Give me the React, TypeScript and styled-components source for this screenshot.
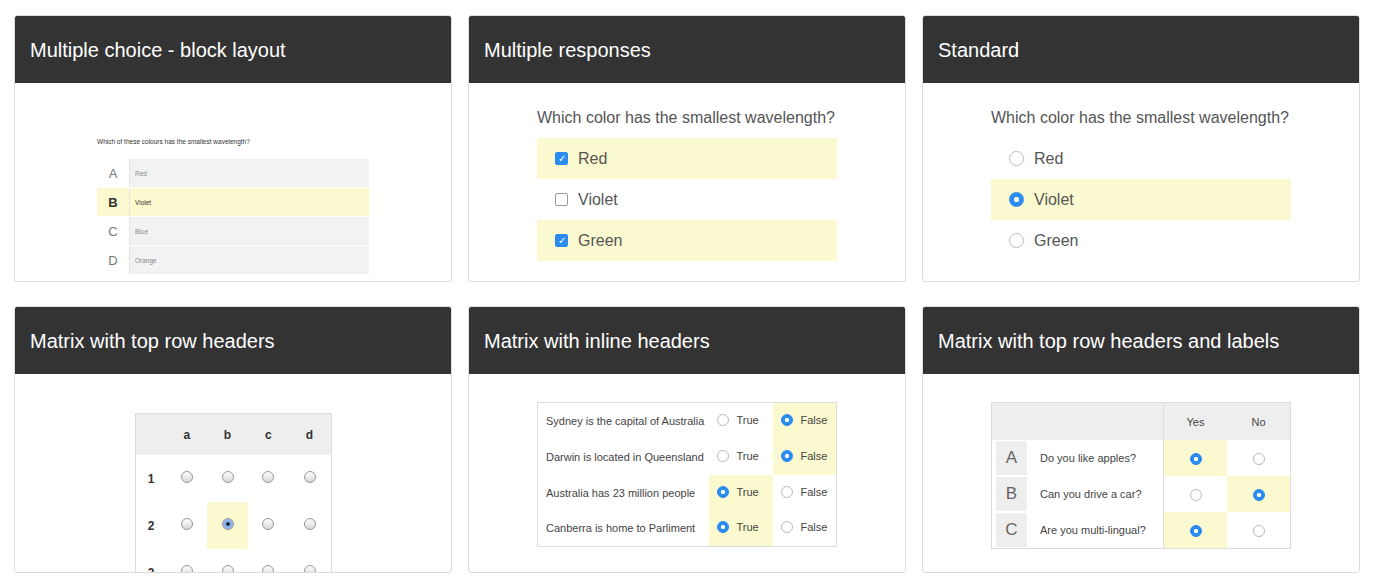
import styled, { createGlobalStyle } from 'styled-components';

const GlobalStyle = createGlobalStyle`
	body {
		margin: 0;
		background: #fff;
		font-family: 'Liberation Sans', Arial, sans-serif;
	}
`;

const Grid = styled.div`
	display: grid;
	grid-template-columns: repeat(3, 438px);
	column-gap: 16px;
	row-gap: 24px;
	padding: 15px 0 0 14px;
`;

const Card = styled.div`
	border: 1px solid #ddd;
	border-radius: 3px;
	overflow: hidden;
	height: 265px;
	display: flex;
	flex-direction: column;
`;

const CardHeader = styled.div`
	background: #333;
	color: #fff;
	height: 67px;
	flex-shrink: 0;
	display: flex;
	align-items: center;
	padding: 2px 0 0 15px;
	box-sizing: border-box;
	font-size: 20px;
`;

const CardBody = styled.div<{ $top: number }>`
	flex: 1;
	overflow: hidden;
	display: flex;
	flex-direction: column;
	align-items: center;
	padding-top: ${(p) => p.$top}px;
`;

const Yellow = '#fbf9cf';

/* block layout */
const SmallQ = styled.div`
	width: 272px;
	font-size: 6.5px;
	color: #333;
	margin-bottom: 14px;
`;
const BlockList = styled.div`
	width: 272px;
	display: flex;
	flex-direction: column;
	gap: 1px;
`;
const BlockRow = styled.div<{ $on?: boolean }>`
	display: flex;
	height: 28px;
	background: ${(p) => (p.$on ? Yellow : '#f2f2f2')};
`;
const BlockLetter = styled.div<{ $on?: boolean }>`
	width: 32px;
	display: flex;
	align-items: center;
	justify-content: center;
	font-size: 13px;
	color: ${(p) => (p.$on ? '#333' : '#777')};
	font-weight: ${(p) => (p.$on ? 'bold' : 'normal')};
	background: ${(p) => (p.$on ? Yellow : '#fff')};
	border-right: 1px solid #e6e6e6;
`;
const BlockText = styled.div<{ $on?: boolean }>`
	display: flex;
	align-items: center;
	padding-left: 5px;
	font-size: 6.5px;
	color: ${(p) => (p.$on ? '#333' : '#888')};
`;

/* list options */
const Question = styled.div`
	width: 300px;
	font-size: 16px;
	color: #555;
	margin-bottom: 11px;
`;
const Option = styled.div<{ $on?: boolean }>`
	width: 300px;
	height: 41px;
	display: flex;
	align-items: center;
	gap: 10px;
	padding-left: 18px;
	box-sizing: border-box;
	font-size: 16px;
	color: #555;
	background: ${(p) => (p.$on ? Yellow : 'transparent')};
`;
const Check = styled.span<{ $on?: boolean }>`
	width: 13px;
	height: 13px;
	border-radius: 2px;
	box-sizing: border-box;
	border: 1px solid ${(p) => (p.$on ? '#2a8cf0' : '#999')};
	background: ${(p) => (p.$on ? '#2a8cf0' : '#fff')};
	display: flex;
	align-items: center;
	justify-content: center;
	color: #fff;
	font-size: 10px;
	line-height: 1;
`;
const Radio = styled.span<{ $on?: boolean; $size?: number }>`
	width: ${(p) => p.$size ?? 15}px;
	height: ${(p) => p.$size ?? 15}px;
	border-radius: 50%;
	box-sizing: border-box;
	flex-shrink: 0;
	display: inline-block;
	vertical-align: middle;
	border: 1px solid ${(p) => (p.$on ? '#2a8cf0' : '#bbb')};
	background: ${(p) => (p.$on ? 'radial-gradient(circle, #fff 0 28%, #2a8cf0 32%)' : '#fff')};
`;
const OldRadio = styled.span<{ $on?: boolean }>`
	width: 12px;
	height: 12px;
	border-radius: 50%;
	display: inline-block;
	box-sizing: border-box;
	border: 1px solid #999;
	background: ${(p) =>
		p.$on
			? 'radial-gradient(circle, #222 0 20%, #7da6e8 30%, #bcd2f5 100%)'
			: 'linear-gradient(#fdfdfd, #d8d8d8)'};
`;

/* matrix tables */
const Table = styled.table<{ $w: number }>`
	width: ${(p) => p.$w}px;
	border-collapse: collapse;
	border: 1px solid #ddd;
	color: #333;
	td,
	th {
		padding: 0;
	}
`;
const Th = styled.th<{ $w?: number }>`
	background: #eee;
	height: 41px;
	font-size: 12px;
	width: ${(p) => (p.$w ? `${p.$w}px` : 'auto')};
`;
const Td = styled.td<{ $on?: boolean; $h: number }>`
	height: ${(p) => p.$h}px;
	text-align: center;
	vertical-align: middle;
	background: ${(p) => (p.$on ? Yellow : 'transparent')};
	font-size: 12px;
	font-weight: bold;
`;
const InlineTd = styled.td<{ $on?: boolean; $w?: number }>`
	height: 36px;
	width: ${(p) => (p.$w ? `${p.$w}px` : 'auto')};
	font-size: 11px;
	color: #444;
	background: ${(p) => (p.$on ? Yellow : 'transparent')};
	padding: 0 0 0 8px !important;
	box-sizing: border-box;
	white-space: nowrap;
`;
const Pair = styled.span`
	display: inline-flex;
	align-items: center;
	gap: 8px;
`;
const LabelTh = styled.th<{ $w?: number; $left?: boolean }>`
	background: #eee;
	height: 37px;
	font-size: 11px;
	font-weight: normal;
	color: #444;
	width: ${(p) => (p.$w ? `${p.$w}px` : 'auto')};
	border-left: ${(p) => (p.$left ? '1px solid #ddd' : 'none')};
`;
const LetterBox = styled.div`
	width: 31px;
	height: 34px;
	margin: 1px 0 1px 4px;
	background: #eee;
	color: #666;
	font-size: 17px;
	display: flex;
	align-items: center;
	justify-content: center;
`;
const LabelTd = styled.td<{ $on?: boolean; $left?: boolean }>`
	text-align: center;
	background: ${(p) => (p.$on ? Yellow : 'transparent')};
	border-left: ${(p) => (p.$left ? '1px solid #ddd' : 'none')};
	height: 36px;
`;
const QText = styled.td`
	font-size: 11px;
	color: #444;
	padding-left: 12px !important;
`;

const block = [
	['A', 'Red'],
	['B', 'Violet'],
	['C', 'Blue'],
	['D', 'Orange'],
];

const inline: [string, boolean][] = [
	['Sydney is the capital of Australia', false],
	['Darwin is located in Queensland', false],
	['Australia has 23 million people', true],
	['Canberra is home to Parliment', true],
];

const labels: [string, string, boolean][] = [
	['A', 'Do you like apples?', true],
	['B', 'Can you drive a car?', false],
	['C', 'Are you multi-lingual?', true],
];

export default function App() {
	return (
		<>
			<GlobalStyle />
			<Grid>
				<Card>
					<CardHeader>Multiple choice - block layout</CardHeader>
					<CardBody $top={55}>
						<SmallQ>Which of these colours has the smallest wavelength?</SmallQ>
						<BlockList>
							{block.map(([l, t]) => (
								<BlockRow key={l} $on={l === 'B'}>
									<BlockLetter $on={l === 'B'}>{l}</BlockLetter>
									<BlockText $on={l === 'B'}>{t}</BlockText>
								</BlockRow>
							))}
						</BlockList>
					</CardBody>
				</Card>
				<Card>
					<CardHeader>Multiple responses</CardHeader>
					<CardBody $top={26}>
						<Question>Which color has the smallest wavelength?</Question>
						<Option $on>
							<Check $on>✓</Check>Red
						</Option>
						<Option>
							<Check />Violet
						</Option>
						<Option $on>
							<Check $on>✓</Check>Green
						</Option>
					</CardBody>
				</Card>
				<Card>
					<CardHeader>Standard</CardHeader>
					<CardBody $top={26}>
						<Question>Which color has the smallest wavelength?</Question>
						<Option>
							<Radio />Red
						</Option>
						<Option $on>
							<Radio $on />Violet
						</Option>
						<Option>
							<Radio />Green
						</Option>
					</CardBody>
				</Card>

				<Card>
					<CardHeader>Matrix with top row headers</CardHeader>
					<CardBody $top={39}>
						<Table $w={197}>
							<thead>
								<tr>
									<Th $w={31} />
									{['a', 'b', 'c', 'd'].map((c) => (
										<Th key={c}>{c}</Th>
									))}
								</tr>
							</thead>
							<tbody>
								{[1, 2, 3].map((r) => (
									<tr key={r}>
										<Td $h={r === 1 ? 46 : 47}>{r}</Td>
										{[0, 1, 2, 3].map((c) => (
											<Td key={c} $h={47} $on={r === 2 && c === 1}>
												<OldRadio $on={r === 2 && c === 1} />
											</Td>
										))}
									</tr>
								))}
							</tbody>
						</Table>
					</CardBody>
				</Card>
				<Card>
					<CardHeader>Matrix with inline headers</CardHeader>
					<CardBody $top={28}>
						<Table $w={300}>
							<tbody>
								{inline.map(([q, t], i) => (
									<tr key={q}>
										<InlineTd>{q}</InlineTd>
										<InlineTd $on={t} $w={64}>
											<Pair>
												<Radio $on={t} $size={12} />
												True
											</Pair>
										</InlineTd>
										<InlineTd $on={!t} $w={64}>
											<Pair>
												<Radio $on={!t} $size={12} />
												False
											</Pair>
										</InlineTd>
									</tr>
								))}
							</tbody>
						</Table>
					</CardBody>
				</Card>
				<Card>
					<CardHeader>Matrix with top row headers and labels</CardHeader>
					<CardBody $top={28}>
						<Table $w={300}>
							<thead>
								<tr>
									<LabelTh $w={36} />
									<LabelTh />
									<LabelTh $w={63} $left>
										Yes
									</LabelTh>
									<LabelTh $w={63}>No</LabelTh>
								</tr>
							</thead>
							<tbody>
								{labels.map(([l, q, y]) => (
									<tr key={l}>
										<td>
											<LetterBox>{l}</LetterBox>
										</td>
										<QText>{q}</QText>
										<LabelTd $on={y} $left>
											<Radio $on={y} $size={12} />
										</LabelTd>
										<LabelTd $on={!y}>
											<Radio $on={!y} $size={12} />
										</LabelTd>
									</tr>
								))}
							</tbody>
						</Table>
					</CardBody>
				</Card>
			</Grid>
		</>
	);
}
